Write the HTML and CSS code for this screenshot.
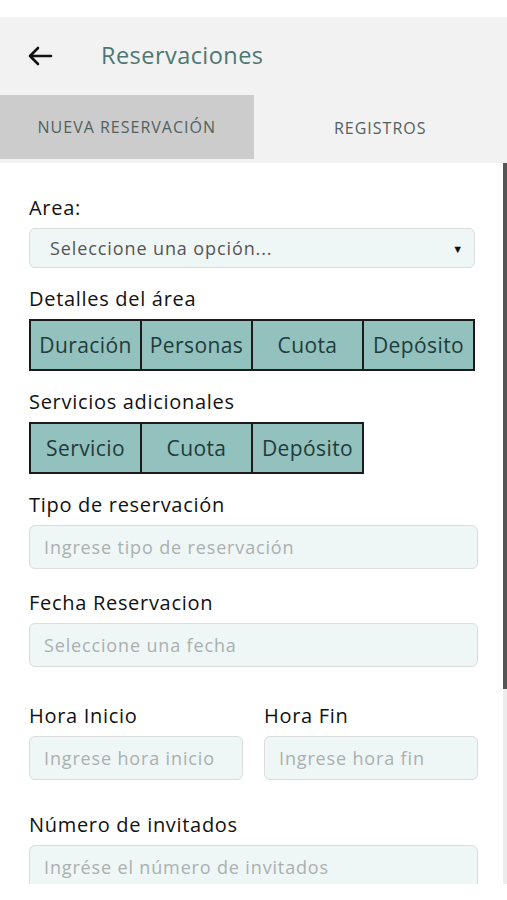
FILE: index.html
```html
<!DOCTYPE html>
<html lang="es">
<head>
    <meta charset="UTF-8">
    <meta name="viewport" content="width=device-width, initial-scale=1.0">
    <title>Reservaciones</title>
    <link rel="stylesheet" href="styles.css">
</head>
<body>
<div class="screen">
    <header class="topbar">
        <button class="back" type="button" aria-label="Regresar">
            <svg width="26" height="20" viewBox="0 0 26 20">
                <path d="M24 10H3M11 2L3 10l8 8" fill="none" stroke="#111" stroke-width="2.6" stroke-linecap="round" stroke-linejoin="round"/>
            </svg>
        </button>
        <h1>Reservaciones</h1>
    </header>

    <nav class="tabs">
        <a class="tab active" href="#">NUEVA RESERVACIÓN</a>
        <a class="tab" href="#">REGISTROS</a>
    </nav>

    <div class="body">
        <form class="form">
            <div class="field first">
                <label>Area:</label>
                <div class="select">
                    <span>Seleccione una opción...</span>
                    <span class="caret">&#9660;</span>
                </div>
            </div>

            <div class="field">
                <label>Detalles del área</label>
                <table class="grid">
                    <tr>
                        <td>Duración</td>
                        <td>Personas</td>
                        <td>Cuota</td>
                        <td>Depósito</td>
                    </tr>
                </table>
            </div>

            <div class="field">
                <label>Servicios adicionales</label>
                <table class="grid">
                    <tr>
                        <td>Servicio</td>
                        <td>Cuota</td>
                        <td>Depósito</td>
                    </tr>
                </table>
            </div>

            <div class="field">
                <label>Tipo de reservación</label>
                <input type="text" placeholder="Ingrese tipo de reservación">
            </div>

            <div class="field wide">
                <label>Fecha Reservacion</label>
                <input type="text" placeholder="Seleccione una fecha">
            </div>

            <div class="row spaced">
                <div class="field">
                    <label>Hora Inicio</label>
                    <input type="text" placeholder="Ingrese hora inicio">
                </div>
                <div class="field">
                    <label>Hora Fin</label>
                    <input type="text" placeholder="Ingrese hora fin">
                </div>
            </div>

            <div class="field last">
                <label>Número de invitados</label>
                <input type="text" placeholder="Ingrése el número de invitados">
            </div>
        </form>
        <div class="scrollbar"><div class="thumb"></div></div>
    </div>
</div>
</body>
</html>
```

FILE: styles.css
```css
* {
    box-sizing: border-box;
}
html, body {
    margin: 0;
    height: 100%;
    background: #fff;
}
body {
    font-family: 'Open Sans', 'Lato', sans-serif;
    color: #111;
}
.screen {
    height: 900px;
    padding: 17px 0 16px;
    display: flex;
    flex-direction: column;
    overflow: hidden;
}
.topbar {
    height: 78px;
    background: #f2f2f2;
    display: flex;
    align-items: center;
    padding-left: 27px;
}
.back {
    background: none;
    border: none;
    padding: 0;
    display: flex;
    cursor: pointer;
}
.topbar h1 {
    margin: 0 0 2px 48px;
    font-size: 23.5px;
    font-weight: 400;
    letter-spacing: 0.45px;
    color: #4e7771;
}
.tabs {
    display: flex;
    height: 68px;
    background: #f2f2f2;
    align-items: flex-start;
}
.tab {
    flex: 1;
    height: 68px;
    display: flex;
    align-items: center;
    justify-content: center;
    padding-bottom: 2px;
    font-size: 16px;
    letter-spacing: 1px;
    color: #52605f;
    text-decoration: none;
}
.tab.active {
    background: #cccccc;
    height: 64px;
    padding-bottom: 0;
}
.body {
    flex: 1;
    display: flex;
    min-height: 0;
}
.form {
    flex: 1;
    padding: 21px 25px 0 29px;
    overflow: hidden;
}
.scrollbar {
    width: 4px;
    background: #ececec;
}
.thumb {
    height: 526px;
    background: #555;
}
.field {
    display: flex;
    flex-direction: column;
    margin-top: 19px;
}
.field.first {
    margin-top: 12px;
}
.field.wide {
    margin-top: 22px;
}
.spaced {
    margin-top: 37px;
}
.field.last {
    margin-top: 33px;
}
.field label {
    font-size: 20px;
    letter-spacing: 0.7px;
    line-height: 24px;
    margin-bottom: 8px;
}
.select {
    height: 40px;
    margin-right: 3px;
    background: #eef6f6;
    border: 1px solid #dcdcdc;
    border-radius: 6px;
    display: flex;
    align-items: center;
    justify-content: space-between;
    padding: 0 10px 0 20px;
    font-size: 18px;
    letter-spacing: 0.9px;
    color: #555;
}
.caret {
    font-size: 11px;
    color: #111;
}
.grid {
    border-collapse: collapse;
    table-layout: fixed;
    border: 2px solid #1b1b1b;
    align-self: flex-start;
}
.grid td {
    width: 111px;
    height: 50px;
    background: #92c1be;
    border: 2px solid #1b1b1b;
    text-align: center;
    font-size: 21px;
    letter-spacing: 0.4px;
    color: #1f3b3a;
    padding: 0;
    white-space: nowrap;
}
input[type="text"] {
    height: 44px;
    width: 100%;
    background: #eef6f6;
    border: 1px solid #dcdcdc;
    border-radius: 6px;
    padding: 0 14px;
    font-family: inherit;
    font-size: 18px;
    letter-spacing: 0.85px;
}
input::placeholder {
    color: #abb0b0;
}
.row {
    display: flex;
    gap: 21px;
}
.row .field {
    flex: 1;
    margin-top: 0;
}
```
